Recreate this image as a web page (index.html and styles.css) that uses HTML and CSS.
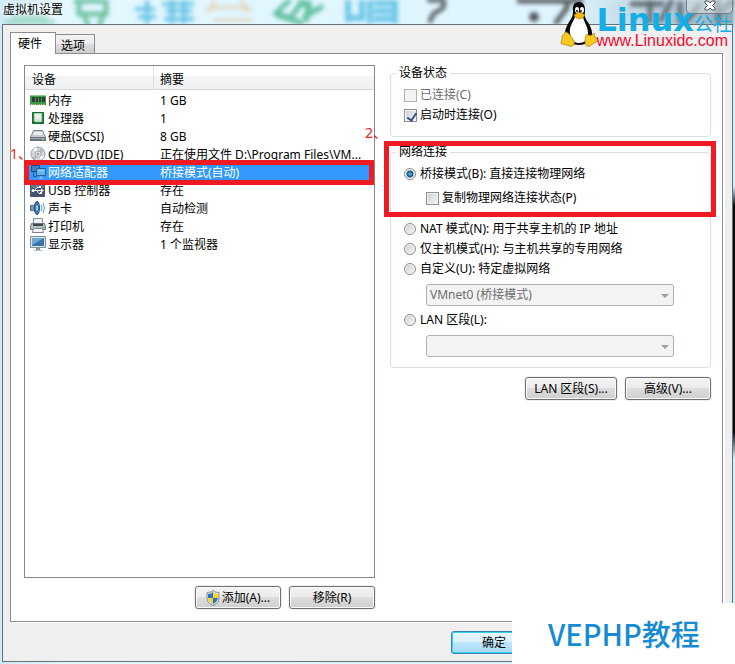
FILE: index.html
```html
<!DOCTYPE html>
<html lang="zh-CN">
<head>
    <meta charset="UTF-8">
    <meta name="viewport" content="width=device-width, initial-scale=1.0">
    <title>虚拟机设置</title>
    <link rel="stylesheet" href="styles.css">
</head>
<body>
    <div class="window">
        <!-- blurred desktop behind the glass frame -->
        <svg class="glass" width="735" height="28" viewBox="0 0 735 28" aria-hidden="true">
            <defs>
                <filter id="blur" x="-10%" y="-50%" width="120%" height="200%"><feGaussianBlur stdDeviation="2"/></filter>
                <linearGradient id="fade" x1="0" x2="1"><stop offset="0" stop-color="#9ab" stop-opacity="0"/><stop offset="1" stop-color="#778894"/></linearGradient>
            </defs>
            <g filter="url(#blur)" fill="none" stroke-width="5">
                <path stroke="#a5dccb" d="M5 22h50M12 17h35"/>
                <path stroke="#72c4a4" d="M76 0v1h30v-1M79 3v11h27V3M84 15l5 12M103 15l-4 12"/>
                <path stroke="#6cc5e5" stroke-width="4" d="M135 9h20M138 17h18M147 0v24M162 4h32M166 11h26M164 19h30M172 0v24M184 0v24"/>
                <path stroke="#e5d5bb" stroke-width="3" d="M205 11q22-8 48 0M216 0l-6 8M240 0l8 8M214 20h38"/>
                <path stroke="#63c1a1" d="M290 0l-14 13 14 5 14-18M276 15l27 8M303 18l20-12M309 0l-3 22M312 8l-14-6"/>
                <path stroke="#6fc8e8" stroke-width="6" d="M348 0v22M348 18h14V0M370 0v24M374 3h24M374 11h24M374 19h24M395 0v24"/>
                <path stroke="#626b70" d="M427 0h16q3 8-5 11-7 3-8 12"/>
                <circle cx="534" cy="17" r="5" fill="#555b60"/>
                <path stroke="#565c61" d="M517 1h66M567 0v8l-12 16M630 4h34M650 0v24M672 0l-12 22M680 2v22M700 4l-16 20M718 0v24M733 0l-14 14"/>
                <rect x="590" y="0" width="145" height="26" fill="url(#fade)" opacity="0.5"/>
            </g>
        </svg>
        <header class="titlebar">
            <h1 class="title">虚拟机设置</h1>
            <button type="button" class="close" aria-label="关闭">
                <svg width="12" height="11" viewBox="0 0 12 11"><path d="M1 1h3l2 2 2-2h3v2L8.500 5.500 11 8v2H8L6 8l-2 2H1V8l2.500-2.500L1 3z" fill="#fff" stroke="#4d555d"/></svg>
            </button>
        </header>

        <main class="dialog">
            <div class="tabs" role="tablist">
                <button type="button" class="tab active" role="tab" aria-selected="true">硬件</button>
                <button type="button" class="tab" role="tab" aria-selected="false">选项</button>
            </div>

            <div class="panel">
                <section class="devices">
                    <div class="list">
                        <table>
                            <thead>
                                <tr><th class="col-device">设备</th><th>摘要</th></tr>
                            </thead>
                            <tbody>
                                <tr>
                                    <td><svg class="icon" viewBox="0 0 16 16"><path fill="#3e9a48" d="M0 3h16v10H0z"/><path fill="#8bd08c" d="M0 3h16v1H0z"/><path fill="#333c36" d="M2 5h3v5H2zM6 5h2v5H6zM9 5h2v5H9zM12 5h3v5h-3z"/><path fill="#d6cf7a" d="M1 12h1v1H1zM3 12h1v1H3zM5 12h1v1H5zM9 12h1v1H9zM11 12h1v1h-1zM13 12h1v1h-1z"/></svg>内存</td>
                                    <td>1 GB</td>
                                </tr>
                                <tr>
                                    <td><svg class="icon" viewBox="0 0 16 16"><path fill="#23934b" stroke="#126d32" d="M2.500 2.500h11v11h-11z"/><path fill="#e9eee8" stroke="#b3d0b5" d="M4.500 3.500h7v8h-7z"/><path fill="#dde2dd" d="M5 9h6v2H5z"/><path fill="#0e4e25" d="M3 12h2v1H3zM11 12h2v1h-2z"/></svg>处理器</td>
                                    <td>1</td>
                                </tr>
                                <tr>
                                    <td><svg class="icon" viewBox="0 0 16 16"><path fill="#c5ccd2" stroke="#80888f" d="M3.500 2.500h9l3 7h-15z"/><path fill="#e9eef1" d="M4 4h8l1 3H3z"/><path fill="#6b747c" d="M0 9h16v4H0z"/><path fill="#a2abb2" d="M1 10h14v1H1z"/><path fill="#71df5b" d="M12 11h2v1h-2z"/></svg>硬盘(SCSI)</td>
                                    <td>8 GB</td>
                                </tr>
                                <tr>
                                    <td><svg class="icon" viewBox="0 0 16 16"><circle cx="8" cy="8" r="7" fill="#d3d7da" stroke="#9da4aa"/><path fill="#f7f8fa" d="M8 8 3 3l3-2zM8 8l6 3-3 3z"/><path fill="#b3bac0" d="m8 8 3-6 3 3zM8 8l-6 4 3 2z"/><circle cx="8" cy="8" r="3" fill="#eef1f3" stroke="#a5adb4"/><circle cx="8" cy="8" r="1" fill="#fff" stroke="#7e878e"/></svg>CD/DVD (IDE)</td>
                                    <td>正在使用文件 D:\Program Files\VM...</td>
                                </tr>
                                <tr class="selected">
                                    <td><svg class="icon" viewBox="0 0 16 16"><path fill="#3c82c4" stroke="#205080" d="M1.500 1.500h8v6h-8z"/><path fill="none" stroke="#295c8e" d="M3.500 8v4.500H7"/><path fill="#63b4ed" stroke="#285c93" d="M6.500 4.500h9v7h-9z"/><path fill="#9bd3f7" d="M8 6h6v1H8z"/><path fill="#8eabc4" d="M10 12h2v2h-2zM8 14h6v1H8z"/></svg>网络适配器</td>
                                    <td>桥接模式(自动)</td>
                                </tr>
                                <tr>
                                    <td><svg class="icon" viewBox="0 0 16 16"><rect width="15" height="14" x="0" y="1" rx="1" fill="#43566b"/><path fill="#687a8e" d="M1 2h13v4H1z"/><path fill="none" stroke="#f2f4f6" d="M3 8.500h9M5 8l2-2.500h3M7 9l2 2.500h2"/><circle cx="3" cy="8.500" r="1.500" fill="#fff"/><path fill="#fff" d="m11 6.500 3 2-3 2zM9 4h2v2H9zM10 10h2v2h-2z"/></svg>USB 控制器</td>
                                    <td>存在</td>
                                </tr>
                                <tr>
                                    <td><svg class="icon" viewBox="0 0 16 16"><path fill="#7797b3" stroke="#486a88" d="M.500 5.500h3l4-4v13l-4-4h-3z"/><ellipse cx="7" cy="8" rx="2.500" ry="6.500" fill="#387cbd" stroke="#234d77"/><ellipse cx="7" cy="8" rx="1" ry="3" fill="#9bd4f5"/><path fill="none" stroke="#4c99cc" d="M11 5q2 3 0 6M13 3q3 5 0 10"/></svg>声卡</td>
                                    <td>自动检测</td>
                                </tr>
                                <tr>
                                    <td><svg class="icon" viewBox="0 0 16 16"><path fill="#eef2fa" stroke="#8590a3" d="M3.500.500h9v6h-9z"/><path fill="#b8bec5" stroke="#6c737d" d="M1.500 5.500h13l1 3v3H.500v-3z"/><path fill="#3f464f" d="M3 6h10v2H3z"/><path fill="#f6f8fb" stroke="#79828e" d="M3.500 10.500h9l1 4h-11z"/><path fill="#45bd44" d="M13 9h2v1h-2z"/></svg>打印机</td>
                                    <td>存在</td>
                                </tr>
                                <tr>
                                    <td><svg class="icon" viewBox="0 0 16 16"><path fill="#dde6ed" stroke="#7d8f9e" d="M.500.500h15v11H.500z"/><path fill="#3774aa" d="M2 2h12v8H2z"/><path fill="#71a9d4" d="M2 2h12L2 9z"/><path fill="#8796a3" d="M6 12h4v2H6z"/><path fill="#b2bfca" d="M4 14h8v1H4z"/></svg>显示器</td>
                                    <td>1 个监视器</td>
                                </tr>
                            </tbody>
                        </table>
                        <span class="mark mark-row"></span>
                        <span class="step step-one">1、</span>
                        <span class="step step-two">2、</span>
                    </div>
                    <div class="buttons">
                        <button type="button" class="btn">
                            <svg class="shield" width="14" height="16" viewBox="0 0 14 16"><path fill="#e6e9ec" stroke="#848c92" d="M7 .500 9 2l4 .500V8q0 5-6 7.500Q1 13 1 8V2.500L5 2z"/><path fill="#2775c9" d="M7 2v6H2V4l3-.500zM7 8h5q-1 4-5 6z"/><path fill="#fbd21d" d="m7 2 2 1.500 3 .500v4H7zM7 8v6Q3 12 2 8z"/></svg>添加(A)...
                        </button>
                        <button type="button" class="btn">移除(R)</button>
                    </div>
                </section>

                <section class="settings">
                    <fieldset class="group status">
                        <legend>设备状态</legend>
                        <label class="option disabled"><input type="checkbox" disabled>已连接(C)</label>
                        <label class="option"><input type="checkbox" checked>启动时连接(O)</label>
                    </fieldset>

                    <fieldset class="group network">
                        <legend>网络连接</legend>
                        <label class="option"><input type="radio" name="net" checked>桥接模式(B): 直接连接物理网络</label>
                        <label class="option sub"><input type="checkbox">复制物理网络连接状态(P)</label>
                        <label class="option nat"><input type="radio" name="net">NAT 模式(N): 用于共享主机的 IP 地址</label>
                        <label class="option"><input type="radio" name="net">仅主机模式(H): 与主机共享的专用网络</label>
                        <label class="option"><input type="radio" name="net">自定义(U): 特定虚拟网络</label>
                        <div class="combo">
                            <select aria-label="特定虚拟网络" disabled><option>VMnet0 (桥接模式)</option></select>
                        </div>
                        <label class="option lan"><input type="radio" name="net">LAN 区段(L):</label>
                        <div class="combo">
                            <select aria-label="LAN 区段" disabled><option></option></select>
                        </div>
                        <span class="mark mark-net"></span>
                    </fieldset>

                    <div class="buttons">
                        <button type="button" class="btn wide">LAN 区段(S)...</button>
                        <button type="button" class="btn">高级(V)...</button>
                    </div>
                </section>
            </div>

            <footer class="footer">
                <button type="button" class="btn default">确定</button>
            </footer>
        </main>

        <div class="logo">
            <svg class="tux" width="38" height="46" viewBox="0 0 38 46" aria-hidden="true">
                <path fill="#090909" d="M19 1c-5 0-7 4-6 9 0 5-1 7-4 11-3 5-5 10-4 15 2 5 8 8 14 8s12-3 13-8c1-6-2-12-5-16-3-5-2-7-2-11 0-5-2-8-6-8z"/>
                <path fill="#fff" d="M15 16c-2 6-6 9-5 16 1 8 5 10 9 10 5 0 9-3 9-10 0-6-4-11-5-16z"/>
                <ellipse cx="17" cy="9" rx="2" ry="3" fill="#fff"/><ellipse cx="22" cy="9" rx="2" ry="3" fill="#fff"/>
                <circle cx="17" cy="10" r="1" fill="#111"/><circle cx="21" cy="10" r="1" fill="#111"/>
                <path fill="#f5b915" stroke="#b87a0b" stroke-width=".5" d="M14 14q5-5 11 0-2 4-6 4-4-1-5-4z"/>
                <path fill="#f7c91e" stroke="#a87a0e" stroke-width=".7" d="M5 31c4 0 7 6 9 9 1 4-1 6-5 5-3-2-8-1-8-3 0-3 2-3 1-6 0-3 2-1 3-5zM27 33c2 2 5 2 7-1 1 3 0 4 4 7-1 3-5 3-8 6-3 1-5-1-5-4 0-3 0-6 2-8z"/>
            </svg>
            <div class="logo-text">
                <div class="logo-name">Linux<span>公社</span></div>
                <div class="logo-url">www.Linuxidc.com</div>
            </div>
        </div>
        <div class="brand">VEPHP教程</div>
    </div>
</body>
</html>
```

FILE: styles.css
```css
* {
    box-sizing: border-box;
}

body {
    margin: 0;
    font-family: "Noto Sans", "Noto Sans CJK SC", sans-serif;
    font-size: 12px;
    line-height: 18px;
    color: #000;
}

button, select, input {
    margin: 0;
    padding: 0;
    font: inherit;
    color: inherit;
}

.window {
    position: relative;
    display: flex;
    flex-direction: column;
    min-height: 100vh;
    overflow: hidden;
    background:
        linear-gradient(#d5eefa 0, #d5eefa 28%, #05080c 31%, #05080c 65%, #d5eefa 69%) right / 2px 100% no-repeat,
        linear-gradient(90deg, #cdebf4 0, #e2f7ff 8%, #dff5ff 75%, #b4ccd8 100%);
}

.glass {
    position: absolute;
    top: 0;
    left: 0;
}

.titlebar {
    position: relative;
    display: flex;
    justify-content: space-between;
    height: 24px;
    padding: 0 2px 0 3px;
}

.title {
    margin: 0;
    font-size: 12px;
    font-weight: normal;
    line-height: 19px;
    text-shadow: 0 0 6px #fff, 0 0 6px #fff;
}

.close {
    display: flex;
    justify-content: center;
    width: 47px;
    height: 14px;
    border: 1px solid #71808a;
    border-top: 0;
    border-radius: 0 0 5px 5px;
    background: rgba(225, 235, 240, 0.5);
}

.dialog {
    position: relative;
    display: flex;
    flex: 1;
    flex-direction: column;
    margin: 0 2px 2px 2px;
    padding: 7px 9px 0 7px;
    border: 1px solid #65707a;
    background: #efefef;
}

/* tabs */
.tabs {
    display: flex;
    align-items: flex-end;
    height: 21px;
}

.tab {
    height: 19px;
    padding: 2px 9px 0 5px;
    border: 1px solid #898c95;
    border-left: 0;
    border-bottom: 0;
    background: linear-gradient(#f2f2f2 0, #ebebeb 50%, #dcdcdc 50%, #cfcfcf 100%);
}

.tab.active {
    position: relative;
    z-index: 1;
    height: 22px;
    margin-bottom: -1px;
    padding: 0 13px 0 7px;
    border-left: 1px solid #898c95;
    background: #fff;
}

.panel {
    display: grid;
    grid-template-columns: minmax(0, 351fr) minmax(0, 321fr);
    gap: 15px;
    flex: 1;
    padding: 11px 11px 12px 13px;
    border: 1px solid #898c95;
    background: #fff;
    box-shadow: 2px 1px 0 #fff;
}

/* device list */
.devices {
    display: flex;
    flex-direction: column;
}

.list {
    position: relative;
    flex: 1;
    border: 1px solid #828790;
}

table {
    width: 100%;
    border-collapse: separate;
    border-spacing: 0;
    table-layout: fixed;
}

th {
    height: 24px;
    padding: 5px 0 0 6px;
    border-bottom: 1px solid #d5d5d5;
    background: linear-gradient(#fff 0, #fff 40%, #f4f5f6 45%, #f0f1f3 100%);
    font-weight: normal;
    text-align: left;
}

.col-device {
    width: 129px;
    padding-left: 7px;
    border-right: 1px solid #dedfe1;
}

tbody::before {
    content: "";
    display: block;
    height: 2px;
}

td {
    height: 18px;
    padding: 0 0 0 6px;
    white-space: nowrap;
}

td:first-child {
    padding-left: 5px;
}

.icon {
    width: 16px;
    height: 16px;
    margin-right: 2px;
    vertical-align: top;
}

.selected td {
    background: #3399ff;
    color: #fff;
}

/* buttons */
.buttons {
    display: flex;
    justify-content: flex-end;
    gap: 8px;
    margin-top: 8px;
}

.btn {
    display: flex;
    align-items: center;
    justify-content: center;
    width: 86px;
    height: 23px;
    border: 1px solid #707070;
    border-radius: 3px;
    background: linear-gradient(#f3f3f3 0, #ebebeb 50%, #dddddd 50%, #cfcfcf 100%);
    box-shadow: inset 0 0 0 1px #fbfbfb, 0 0 0 1px #efefef;
    white-space: nowrap;
}

.btn.wide {
    width: 92px;
}

.btn.default {
    border-color: #3c7fb1;
    background: linear-gradient(#eaf6fd 0, #d9f0fc 50%, #bee6fd 50%, #a7d9f5 100%);
    box-shadow: inset 0 0 0 1px #35d2f5;
}

.shield {
    margin-right: 2px;
}

/* settings */
.group {
    position: relative;
    min-width: 0;
    margin: 0;
    padding: 4px 12px 11px 13px;
    border: 1px solid #d5dfe5;
    border-radius: 4px;
}

.group.network {
    margin-top: 7px;
    padding-bottom: 10px;
}

legend {
    margin-left: -8px;
    padding: 0 3px;
    line-height: 16px;
}

.option {
    display: flex;
    align-items: center;
    height: 20px;
    white-space: nowrap;
}

.option.disabled {
    color: #6d6d6d;
}

.option.sub {
    margin: 4px 0 0 22px;
}

.option.nat {
    margin-top: 11px;
}

.option.lan {
    margin-top: 4px;
}

input {
    flex: none;
    appearance: none;
    width: 13px;
    height: 13px;
    margin-right: 3px;
    border: 1px solid #8e8f8f;
    background: linear-gradient(135deg, #cbcfd5, #f6f6f6);
    box-shadow: inset 0 0 0 1px #f4f4f4;
}

input[type="radio"] {
    width: 12px;
    height: 12px;
    margin-right: 4px;
    border-radius: 50%;
}

input[type="radio"]:checked {
    background: radial-gradient(circle, #5cc4ee 0, #12507c 3px, #e3e8ec 4px);
}

input[type="checkbox"]:checked::before {
    content: "";
    display: block;
    width: 4px;
    height: 8px;
    margin: 1px 0 0 4px;
    border: solid #35528f;
    border-width: 0 2px 2px 0;
    transform: rotate(35deg);
}

input:disabled {
    border-color: #b1b1b1;
    background: #f3f3f3;
}

.combo {
    position: relative;
    margin: 5px 24px 0 22px;
}

.combo::after {
    content: "";
    position: absolute;
    top: 10px;
    right: 5px;
    border: 4px solid transparent;
    border-top-color: #9a9fa3;
    border-bottom: 0;
}

select {
    display: block;
    appearance: none;
    width: 100%;
    height: 22px;
    padding-left: 3px;
    border: 1px solid #adb2b5;
    border-radius: 3px;
    background: #f3f3f3;
}

select:disabled {
    color: #6d6d6d;
    opacity: 1;
}

.settings .buttons {
    margin-top: 9px;
}

.footer {
    display: flex;
    justify-content: flex-end;
    padding: 9px 186px 7px 0;
}

/* red marks */
.mark {
    position: absolute;
    border: 5px solid #ee1b22;
    pointer-events: none;
}

.mark-row {
    top: 94px;
    left: -1px;
    right: 0;
    height: 25px;
}

.mark-net {
    top: -19px;
    left: -7px;
    right: -6px;
    height: 76px;
}

.step {
    position: absolute;
    font-size: 14px;
    color: #ee1b22;
}

.step-one {
    top: 79px;
    left: -15px;
}

.step-two {
    top: 58px;
    right: -13px;
}

/* logos */
.logo {
    position: absolute;
    top: 1px;
    right: 3px;
    display: flex;
}

.logo-text {
    margin-left: -2px;
}

.logo-name {
    display: flex;
    height: 32px;
    font: bold 32px/38px "DejaVu Sans", sans-serif;
    color: #13aee3;
    white-space: nowrap;
}

.logo-name span {
    font: 19px/44px "Noto Sans CJK SC", sans-serif;
}

.logo-url {
    font: 16px/16px "Liberation Sans", sans-serif;
    color: #f5092f;
}

.brand {
    position: absolute;
    right: 0;
    bottom: 0;
    width: 223px;
    height: 61px;
    padding-left: 36px;
    background: #fff;
    font: 500 29px/60px "Noto Sans CJK SC", sans-serif;
    color: #168bd2;
}
```
